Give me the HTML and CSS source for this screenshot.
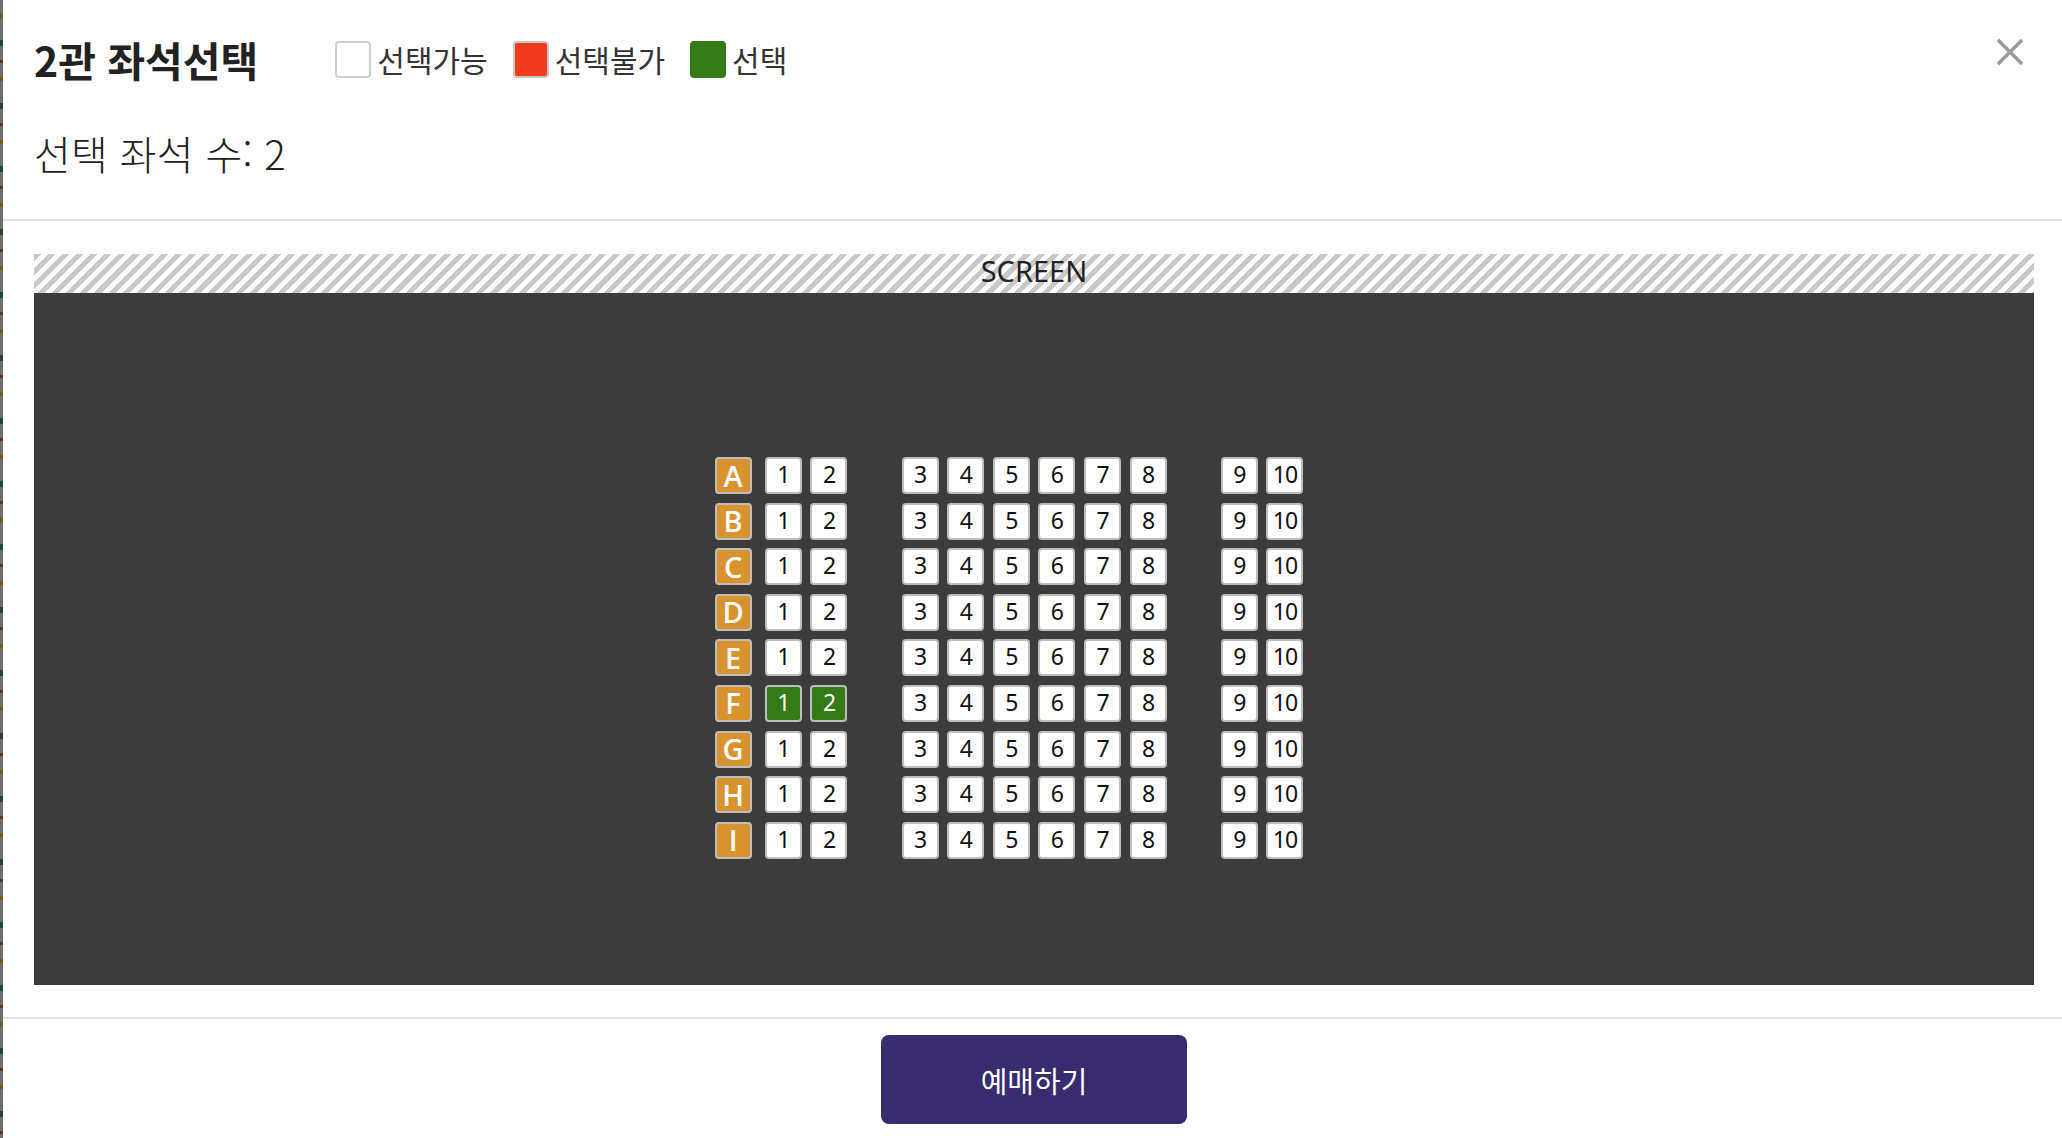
FILE: index.html
```html
<!DOCTYPE html>
<html lang="ko">
<head>
<meta charset="utf-8">
<title>2관 좌석선택</title>
<link rel="stylesheet" href="styles.css">
</head>
<body>
<div class="edge"></div>
<div class="modal">
  <header class="header">
    <div class="title-row">
      <h1 class="title">2관 좌석선택</h1>
      <ul class="legend">
        <li class="legend-item"><span class="swatch swatch-free"></span>선택가능</li>
        <li class="legend-item"><span class="swatch swatch-taken"></span>선택불가</li>
        <li class="legend-item"><span class="swatch swatch-picked"></span>선택</li>
      </ul>
      <button class="close" aria-label="닫기">
        <svg viewBox="0 0 28 28" width="28" height="28"><path d="M2 2 L26 26 M26 2 L2 26" stroke="#9a9a9a" stroke-width="3.4" fill="none"/></svg>
      </button>
    </div>
    <p class="count">선택 좌석 수: 2</p>
  </header>
  <main class="content">
    <div class="screen"><span>SCREEN</span></div>
    <div class="hall">
      <div class="seatmap">
        <div class="row"><span class="label">A</span><span class="seat">1</span><span class="seat">2</span><span class="aisle"></span><span class="seat">3</span><span class="seat">4</span><span class="seat">5</span><span class="seat">6</span><span class="seat">7</span><span class="seat">8</span><span class="aisle"></span><span class="seat">9</span><span class="seat">10</span></div>
        <div class="row"><span class="label">B</span><span class="seat">1</span><span class="seat">2</span><span class="aisle"></span><span class="seat">3</span><span class="seat">4</span><span class="seat">5</span><span class="seat">6</span><span class="seat">7</span><span class="seat">8</span><span class="aisle"></span><span class="seat">9</span><span class="seat">10</span></div>
        <div class="row"><span class="label">C</span><span class="seat">1</span><span class="seat">2</span><span class="aisle"></span><span class="seat">3</span><span class="seat">4</span><span class="seat">5</span><span class="seat">6</span><span class="seat">7</span><span class="seat">8</span><span class="aisle"></span><span class="seat">9</span><span class="seat">10</span></div>
        <div class="row"><span class="label">D</span><span class="seat">1</span><span class="seat">2</span><span class="aisle"></span><span class="seat">3</span><span class="seat">4</span><span class="seat">5</span><span class="seat">6</span><span class="seat">7</span><span class="seat">8</span><span class="aisle"></span><span class="seat">9</span><span class="seat">10</span></div>
        <div class="row"><span class="label">E</span><span class="seat">1</span><span class="seat">2</span><span class="aisle"></span><span class="seat">3</span><span class="seat">4</span><span class="seat">5</span><span class="seat">6</span><span class="seat">7</span><span class="seat">8</span><span class="aisle"></span><span class="seat">9</span><span class="seat">10</span></div>
        <div class="row"><span class="label">F</span><span class="seat selected">1</span><span class="seat selected">2</span><span class="aisle"></span><span class="seat">3</span><span class="seat">4</span><span class="seat">5</span><span class="seat">6</span><span class="seat">7</span><span class="seat">8</span><span class="aisle"></span><span class="seat">9</span><span class="seat">10</span></div>
        <div class="row"><span class="label">G</span><span class="seat">1</span><span class="seat">2</span><span class="aisle"></span><span class="seat">3</span><span class="seat">4</span><span class="seat">5</span><span class="seat">6</span><span class="seat">7</span><span class="seat">8</span><span class="aisle"></span><span class="seat">9</span><span class="seat">10</span></div>
        <div class="row"><span class="label">H</span><span class="seat">1</span><span class="seat">2</span><span class="aisle"></span><span class="seat">3</span><span class="seat">4</span><span class="seat">5</span><span class="seat">6</span><span class="seat">7</span><span class="seat">8</span><span class="aisle"></span><span class="seat">9</span><span class="seat">10</span></div>
        <div class="row"><span class="label">I</span><span class="seat">1</span><span class="seat">2</span><span class="aisle"></span><span class="seat">3</span><span class="seat">4</span><span class="seat">5</span><span class="seat">6</span><span class="seat">7</span><span class="seat">8</span><span class="aisle"></span><span class="seat">9</span><span class="seat">10</span></div>
      </div>
    </div>
  </main>
  <footer class="footer">
    <button class="book">예매하기</button>
  </footer>
</div>
</body>
</html>
```
FILE: styles.css
```css
* { box-sizing: border-box; }
html, body { margin: 0; padding: 0; }
body {
  width: 2062px;
  height: 1138px;
  overflow: hidden;
  display: flex;
  background: #ffffff;
  font-family: "Noto Sans", "Noto Sans CJK KR", sans-serif;
  color: #222;
}
.edge {
  width: 3px;
  flex: none;
  background: repeating-linear-gradient(180deg, #6e6e6e 0 14px, #7a5a12 14px 18px, #6e6e6e 18px 40px, #1f4a2a 40px 46px, #6e6e6e 46px 60px, #6a3214 60px 63px);
}
.modal {
  flex: 1;
  display: flex;
  flex-direction: column;
  background: #fff;
}
.header {
  height: 221px;
  padding: 39px 0 0 31px;
  border-bottom: 2px solid #e2e2e2;
}
.title-row {
  display: flex;
  align-items: center;
  height: 40px;
}
.title {
  margin: 0;
  font-family: "Noto Sans CJK KR", sans-serif;
  font-weight: 700;
  font-size: 41px;
  line-height: 40px;
  color: #222;
  letter-spacing: 0;
}
.legend {
  display: flex;
  align-items: center;
  list-style: none;
  margin: 0 0 0 77px;
  padding: 0;
  flex: 1;
}
.legend-item {
  display: flex;
  align-items: center;
  font-family: "Noto Sans CJK KR", sans-serif;
  font-size: 30px;
  color: #333;
  margin-right: 25px;
  letter-spacing: 0;
}
.swatch {
  width: 36px;
  height: 37px;
  border-radius: 4px;
  border: 2px solid #cfcfcf;
  margin-right: 6px;
  background: #fff;
}
.swatch-taken { background: #f03b1f; border-color: #c9c9c9; }
.swatch-picked { background: #347a17; border-color: #347a17; }
.close {
  border: 0;
  background: none;
  padding: 0;
  margin: -14px 38px 0 0;
  width: 28px;
  height: 28px;
  cursor: pointer;
}
.close svg { display: block; }
.count {
  margin: 54px 0 0 0;
  font-family: "Noto Sans CJK KR", sans-serif;
  font-weight: 300;
  font-size: 40px;
  line-height: 40px;
  color: #222;
  letter-spacing: 0.3px;
}
.content {
  padding: 33px 28px 32px 31px;
}
.screen {
  height: 39px;
  background: repeating-linear-gradient(135deg, #c8c8c8 0 5px, #ffffff 5px 10px);
  display: flex;
  justify-content: center;
  align-items: center;
}
.screen span {
  font-family: "Noto Sans", sans-serif;
  font-size: 29px;
  line-height: 30px;
  color: #222;
  margin-top: -6px;
}
.hall {
  height: 692px;
  background: #3c3c3c;
  display: flex;
  justify-content: center;
  align-items: flex-start;
  padding: 164px 50px 0 0;
}
.seatmap {
  display: flex;
  flex-direction: column;
  gap: 8.6px;
}
.row {
  display: flex;
  gap: 8.6px;
}
.seat, .label, .aisle {
  width: 37px;
  height: 37px;
  flex: none;
}
.seat, .label {
  display: flex;
  align-items: center;
  justify-content: center;
  border: 2px solid #bdbdbd;
  border-radius: 4px;
  padding-bottom: 3px;
}
.seat {
  background: #fff;
  color: #111;
  font-family: "Noto Sans", sans-serif;
  font-size: 23px;
  letter-spacing: -1px;
}
.seat.selected {
  background: #347a17;
  color: #fff;
}
.label {
  background: #d8922e;
  color: #fff;
  font-family: "Open Sans", sans-serif;
  font-weight: 600;
  font-size: 29px;
  margin-right: 4.7px;
  padding-bottom: 1px;
}
.footer {
  border-top: 2px solid #e2e2e2;
  padding: 16px 0 14px;
  display: flex;
  justify-content: center;
}
.book {
  width: 306px;
  height: 89px;
  margin-left: 3px;
  border: 0;
  border-radius: 8px;
  background: #382b6e;
  color: #fff;
  font-family: "Noto Sans CJK KR", sans-serif;
  font-size: 29px;
  letter-spacing: 0;
}
```
